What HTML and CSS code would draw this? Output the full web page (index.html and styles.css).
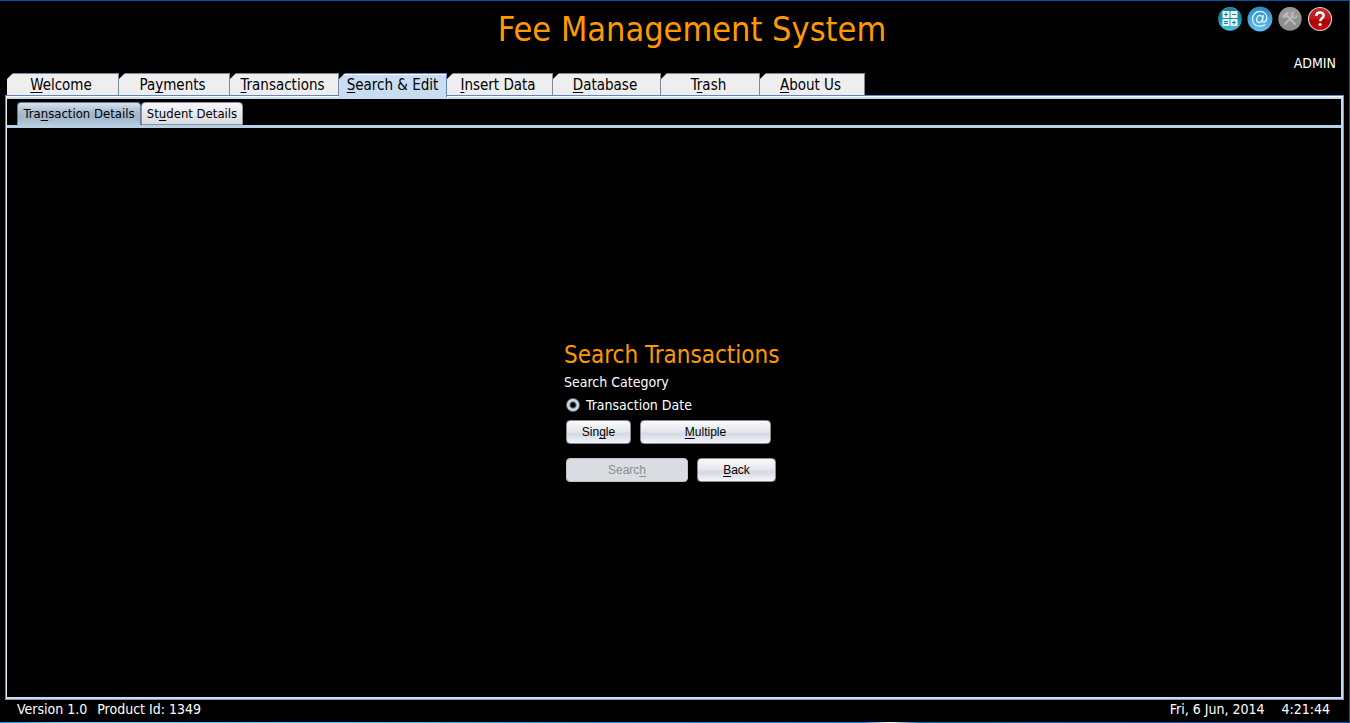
FILE: index.html
```html
<!DOCTYPE html>
<html lang="en">
<head>
<meta charset="utf-8">
<title>Fee Management System</title>
<link rel="stylesheet" href="styles.css">
</head>
<body>
<div class="window">
  <header class="header">
    <h1 class="title">Fee Management System</h1>
    <div class="account">
      <div class="tools">
        <button class="tool" type="button" aria-label="Calculator">
          <svg viewBox="0 0 26 26" width="26" height="26">
            <defs><linearGradient id="teal" x1="0" y1="0" x2="0" y2="1"><stop offset="0" stop-color="#137c9f"/><stop offset=".5" stop-color="#198fae"/><stop offset="1" stop-color="#45c5de"/></linearGradient></defs>
            <circle cx="13" cy="13" r="11.800" fill="url(#teal)"/>
            <path d="M3 8a11 11 0 0 1 20 0" fill="none" stroke="#2e9bb8" stroke-width="1"/>
            <g fill="#effbfd"><rect x="5.500" y="5" width="7" height="7"/><rect x="13.500" y="5" width="7" height="7"/><rect x="5.500" y="13" width="7" height="7"/><rect x="13.500" y="13" width="7" height="7"/></g>
            <path d="M7 8.500h4M9 6.500v4M15 8.500h4M7 15.700h4M7 17.500h4M15 16.500h4M17 14.500v4" stroke="#168caa" stroke-width="1.200"/>
          </svg>
        </button>
        <button class="tool" type="button" aria-label="Mail">
          <svg viewBox="0 0 26 26" width="26" height="26">
            <defs><linearGradient id="sky" x1="0" y1="0" x2="0" y2="1"><stop offset="0" stop-color="#2589bd"/><stop offset=".5" stop-color="#47a6da"/><stop offset="1" stop-color="#62c2ef"/></linearGradient></defs>
            <circle cx="13" cy="13" r="12.500" fill="url(#sky)"/>
            <g fill="none" stroke="#e6f6ff" stroke-width="1.300" stroke-linecap="round"><ellipse cx="12.600" cy="13" rx="2.900" ry="3.500" transform="rotate(18 12.600 13)"/><path d="M16.300 9.500l-1 5.200c-.2 2.500 4.500 1.800 4.500-2.700 0-4-3-6.500-6.800-6.500-4.500 0-7.500 3.300-7.500 7.500 0 4.500 3 7.200 7.500 7.200 1.800 0 3.300-.4 4.600-1.300"/></g>
          </svg>
        </button>
        <button class="tool" type="button" aria-label="Settings" disabled>
          <svg viewBox="0 0 26 26" width="26" height="26">
            <circle cx="13" cy="13" r="11.700" fill="#8f8f8f"/>
            <path d="M2 12a11 11 0 0 1 22 0" fill="#979797"/>
            <g fill="none" stroke="#bababa" stroke-linecap="round"><path d="M9 9l9 9" stroke-width="2"/><path d="M16.500 9.500l-8.500 8.500" stroke-width="1.800"/><path d="M7 10.500l3.500-3.500" stroke-width="2.600"/><path d="M17 6.500a2.800 2.800 0 1 0 2.700 3.500" stroke-width="1.600"/></g>
          </svg>
        </button>
        <button class="tool" type="button" aria-label="Help">
          <svg viewBox="0 0 26 26" width="26" height="26">
            <defs><linearGradient id="red" x1="0" y1="0" x2="0" y2="1"><stop offset="0" stop-color="#c52a2e"/><stop offset=".48" stop-color="#c0181c"/><stop offset=".55" stop-color="#aa0004"/><stop offset="1" stop-color="#c60d11"/></linearGradient></defs>
            <circle cx="13" cy="13" r="11.500" fill="url(#red)" stroke="#d3c8c8" stroke-width="1.200"/>
            <path d="M9.300 10c0-4.500 7.400-4.600 7.400-.5 0 2.700-3.500 2.900-3.500 5.800" fill="none" stroke="#fff" stroke-width="2.500"/>
            <circle cx="13.100" cy="18.500" r="1.600" fill="#fff"/>
          </svg>
        </button>
      </div>
      <span class="user">ADMIN</span>
    </div>
  </header>

  <nav class="tabs">
    <button class="tab" type="button"><span><u>W</u>elcome</span></button>
    <button class="tab" type="button"><span>Pa<u>y</u>ments</span></button>
    <button class="tab" type="button"><span><u>T</u>ransactions</span></button>
    <button class="tab tab-active" type="button"><span><u>S</u>earch &amp; Edit</span></button>
    <button class="tab" type="button"><span><u>I</u>nsert Data</span></button>
    <button class="tab" type="button"><span><u>D</u>atabase</span></button>
    <button class="tab" type="button"><span>T<u>r</u>ash</span></button>
    <button class="tab" type="button"><span><u>A</u>bout Us</span></button>
  </nav>

  <main class="panel">
    <nav class="subtabs">
      <button class="subtab subtab-active" type="button">Tra<u>n</u>saction Details</button>
      <button class="subtab" type="button">St<u>u</u>dent Details</button>
    </nav>
    <div class="content">
      <form class="search">
        <h2 class="heading">Search Transactions</h2>
        <div class="caption">Search Category</div>
        <label class="option"><input class="radio" type="radio" name="category" checked>Transaction Date</label>
        <div class="row">
          <button class="button single" type="button">Sin<u>g</u>le</button>
          <button class="button multiple" type="button"><u>M</u>ultiple</button>
        </div>
        <div class="row">
          <button class="button find" type="submit" disabled>Searc<u>h</u></button>
          <button class="button back" type="button"><u>B</u>ack</button>
        </div>
      </form>
    </div>
  </main>

  <footer class="status">
    <span>Version 1.0</span>
    <span>Product Id: 1349</span>
    <span class="date">Fri, 6 Jun, 2014</span>
    <span>4:21:44</span>
  </footer>
</div>
</body>
</html>
```
FILE: styles.css
```css
* { box-sizing: border-box; }
body {
  margin: 0;
  background: #000;
  color: #fff;
  font: 14px/18px "DejaVu Sans Condensed", "Noto Sans", sans-serif;
}
button { font: inherit; padding: 0; margin: 0; }
u {
  text-decoration-thickness: 1px;
  text-underline-offset: 2px;
  text-decoration-skip-ink: none;
}
.window {
  min-height: 100vh;
  display: flex;
  flex-direction: column;
  border: 1px solid #0751a5;
  border-left: 0;
  position: relative;
}
.window::after {
  content: "";
  position: absolute;
  left: 0;
  right: 0;
  bottom: -1px;
  height: 1px;
  background: linear-gradient(90deg, #0b8fe0, #67d3f8 5%, #45c5f4 28%, #1590df 45%, #0b7cd0 64%, #fff 66%, #0b6cc0 68%, #0751a5);
}
.header {
  display: grid;
  grid-template-columns: 1fr auto 1fr;
  height: 72px;
  padding: 5px 13px 0 48px;
}
.title {
  grid-column: 2;
  margin: 0;
  color: #ff9900;
  font-size: 34px;
  line-height: 46px;
  font-weight: 400;
}
.account {
  display: flex;
  flex-direction: column;
  align-items: flex-end;
  gap: 22px;
}
.tools { display: flex; gap: 4px; padding-right: 3px; }
.tool { background: none; border: 0; display: block; height: 26px; }
.tool svg { display: block; }
.tabs {
  display: grid;
  grid-template-columns: 112px 111px 109px 108px 106px 108px 99px 105px;
  height: 22px;
  padding-left: 7px;
}
.tab {
  border: 0;
  padding: 1px 1px 0 0;
  background: #7a8a99;
  clip-path: polygon(6px 0, 100% 0, 100% 100%, 0 100%, 0 6px);
  color: #000;
  font-size: 15px;
  line-height: 20px;
}
.tab span {
  display: block;
  height: 21px;
  background: #eee;
  padding-top: 1px;
  padding-right: 3px;
  clip-path: polygon(5px 0, 100% 0, 100% 100%, 0 100%, 0 5px);
}
.tab-active { background: #6382bf; margin-bottom: -2px; z-index: 1; }
.tab-active span {
  height: 23px;
  padding: 0;
  background: #c8ddf2;
  border-top: 1px solid #fff;
}
.panel {
  flex: 1;
  display: flex;
  flex-direction: column;
  margin: 0 5px 0 5px;
  border: 1px solid #6382bf;
  border-right-color: #8a9aaa;
  border-bottom-color: #8a9aaa;
  box-shadow: inset 0 1px #fff, inset 1px 0 #dce9f6, inset 0 3px #c8ddf2, inset -2px -2px #c8ddf2;
  padding: 3px 2px 2px 1px;
}
.subtabs {
  display: flex;
  height: 29px;
  padding: 3px 0 0 10px;
  border-bottom: 3px solid #b8cfe5;
}
.subtab {
  width: 102px;
  height: 23px;
  border: 1px solid #8f939b;
  border-radius: 4px 4px 0 0;
  background: linear-gradient(#f8f8fb, #e7e8ec 50%, #d9dce3);
  color: #000;
  font-size: 13px;
  line-height: 20px;
  white-space: nowrap;
}
.subtab-active {
  width: 124px;
  border-color: #66788b;
  border-bottom: 0;
  background: linear-gradient(#d8e3ed, #aabdd0 40%, #9fb5ca 65%, #b7cbe0);
}
.content {
  flex: 1;
  display: grid;
  place-items: center;
  padding-bottom: 4px;
}
.search {
  width: 220px;
  display: flex;
  flex-direction: column;
}
.heading {
  margin: 0;
  color: #ff9900;
  font-size: 24px;
  line-height: 30px;
  font-weight: 400;
  white-space: nowrap;
}
.caption { line-height: 24px; }
.option {
  display: flex;
  align-items: center;
  gap: 6px;
  height: 22px;
  padding-left: 2px;
}
.radio {
  appearance: none;
  width: 14px;
  height: 14px;
  margin: 0;
  border: 1px solid #56697c;
  border-radius: 50%;
  background: radial-gradient(circle, #000 2px, #c3ced9 4px, #dce6ef 6px);
}
.row { display: flex; gap: 9px; padding: 4px 0 10px 2px; }
.row:last-child { padding-bottom: 0; }
.button {
  height: 24px;
  border: 1px solid #888d96;
  border-radius: 4px;
  background: linear-gradient(#fafafc, #e6e8ec 45%, #d5d9e0 60%, #f3f6fc);
  color: #000;
  font-family: "Liberation Sans", Arial, sans-serif;
  font-size: 12px;
  line-height: 22px;
}
.button:disabled { background: #d9dce1; border-color: #c0c3c9; color: #8e8f91; }
.single { width: 65px; }
.multiple { width: 131px; }
.find { width: 122px; }
.back { width: 79px; }
.status {
  display: flex;
  gap: 10px;
  height: 22px;
  padding: 0 19px 0 17px;
}
.date { margin-left: auto; padding-right: 7px; }
```
